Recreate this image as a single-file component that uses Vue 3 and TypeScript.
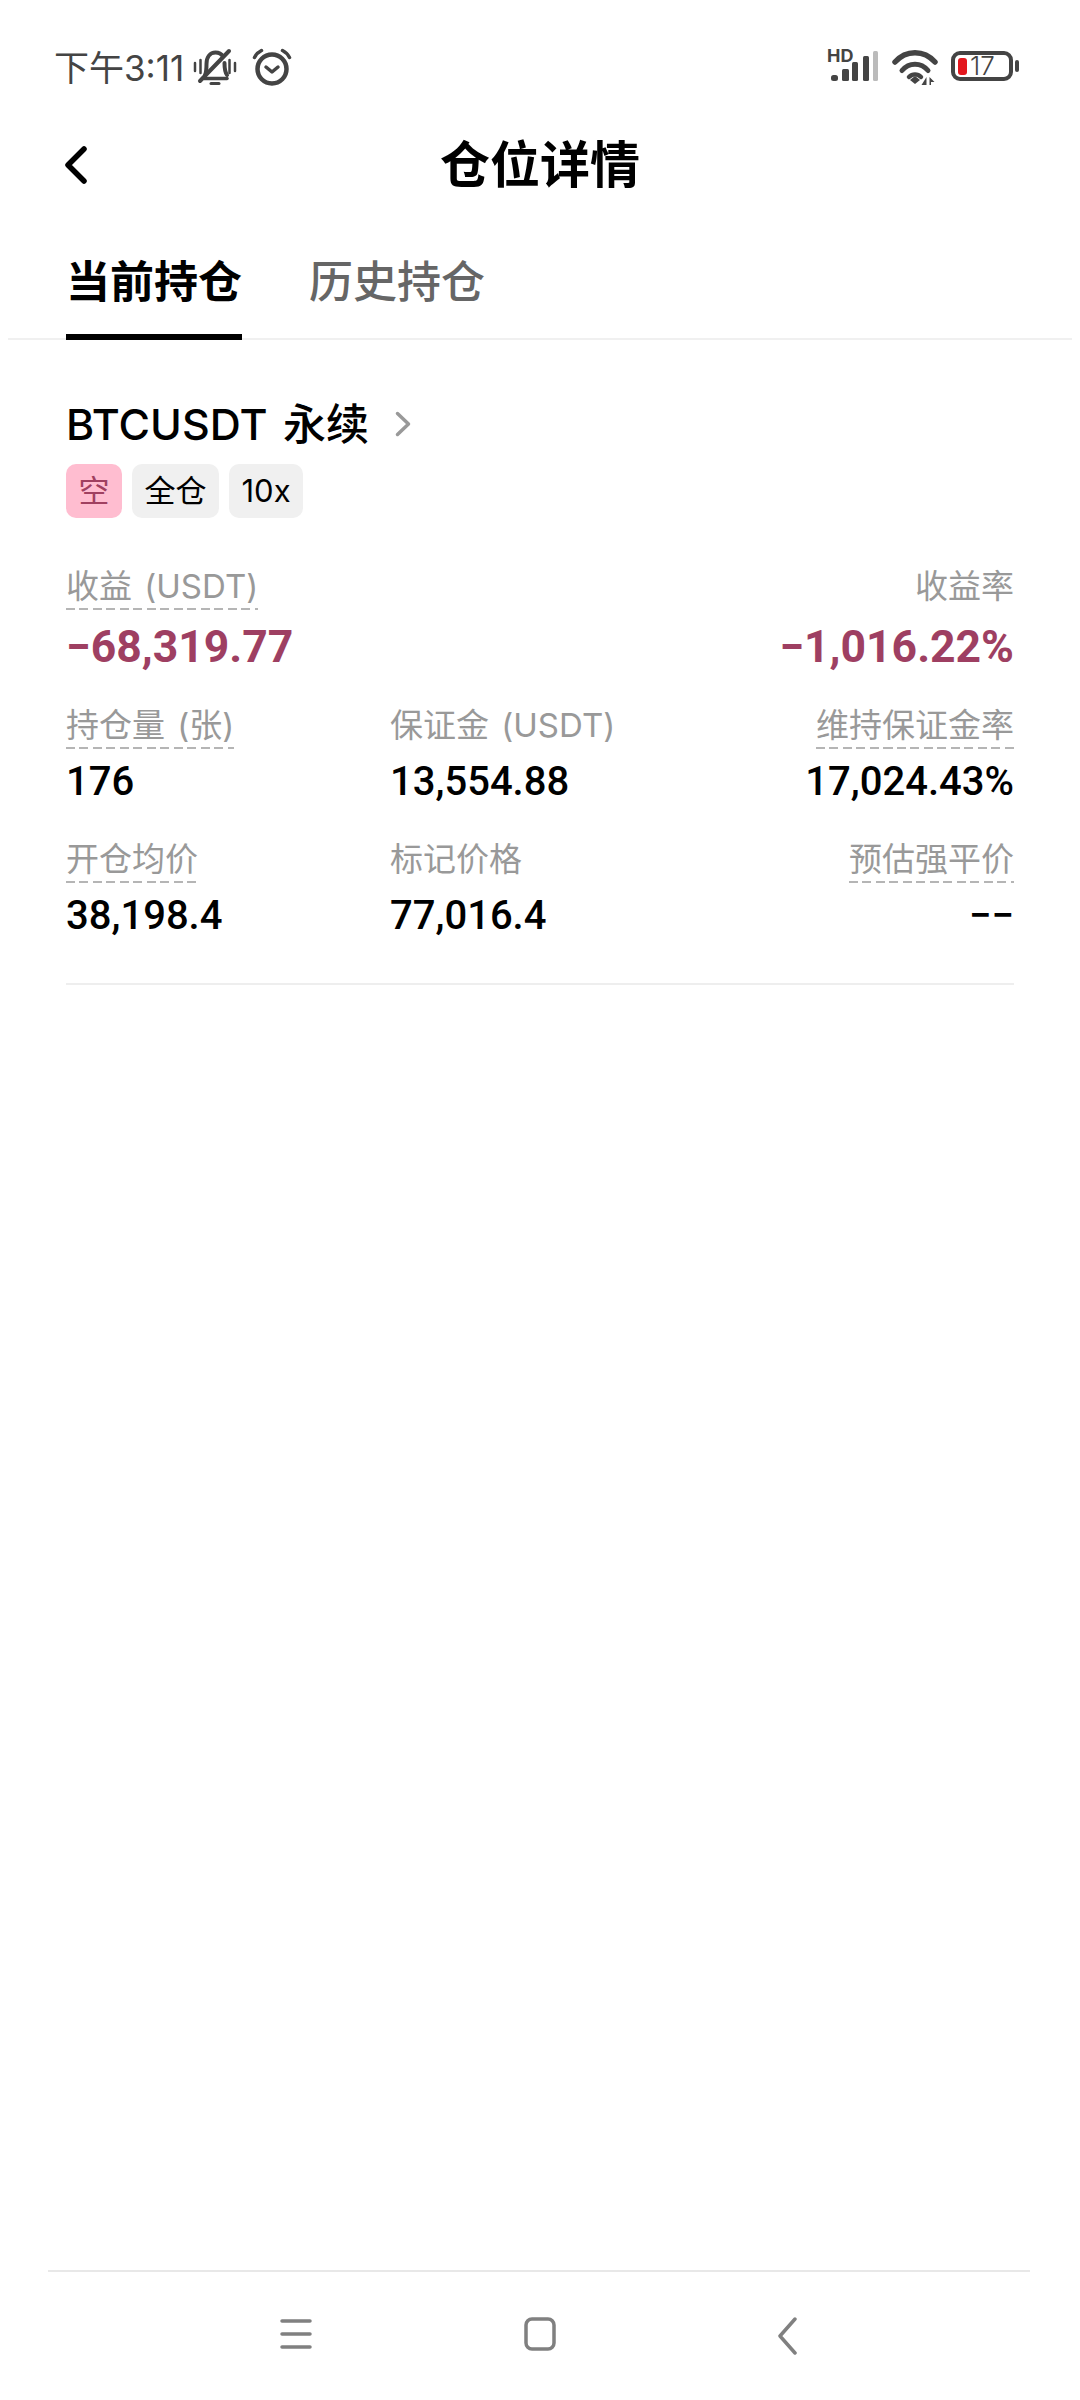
<template>
  <div class="page">
    <div class="status-bar">
      <div class="status-left">
        <span class="time">下午3:11</span>
        <svg class="bell" width="44" height="38" viewBox="0 0 44 38" fill="none" stroke="#444" stroke-linecap="round">
          <path d="M12 27c1.500-3 1.500-7 1.500-11C13.500 9 17 4.500 22.500 4.500c3.500 0 6 1.500 7.500 4M31.500 15c0 5 .5 9 2.500 12" stroke-width="4" />
          <path d="M11 30.500h23" stroke-width="3.500" />
          <path d="M7 33 36 3" stroke-width="4" />
          <path d="M2 15v8M7.500 12v13M36.500 12v13M42 15v8" stroke-width="2.500" />
          <path d="M18 35.500h8" stroke-width="3" />
        </svg>
        <svg class="alarm" width="40" height="38" viewBox="0 0 40 38" fill="none" stroke="#444" stroke-linecap="round" stroke-linejoin="round">
          <circle cx="20" cy="21" r="14.500" stroke-width="4.500" />
          <path d="M14 19l6 5 6-5" stroke-width="3.500" />
          <path d="M2.500 9.500C4 6.500 6.500 4 9.500 2.500M37.500 9.500C36 6.500 33.500 4 30.500 2.500" stroke-width="3.500" />
        </svg>
      </div>
      <div class="status-right">
        <svg width="52" height="34" viewBox="0 0 52 34">
          <text x="0" y="13" class="hd">HD</text>
          <rect x="4" y="26" width="7" height="6" rx="2.500" fill="#444" />
          <rect x="15" y="20" width="7" height="12" rx="1.500" fill="#444" />
          <rect x="25" y="13" width="6" height="19" rx="1.500" fill="#444" />
          <rect x="36" y="7" width="6" height="25" rx="1.500" fill="#444" />
          <rect x="46" y="2" width="5" height="30" rx="1.500" fill="#bbb" />
        </svg>
        <svg width="46" height="37" viewBox="0 0 46 37" fill="none" stroke="#444" stroke-linecap="round">
          <path d="M3 14C14 1.500 32 1.500 43 14" stroke-width="5.500" />
          <path d="M10 22.500C17 14 29 14 36 22.500" stroke-width="5" />
          <path d="M17 29c3.500-3.500 8.500-3.500 12 0" stroke-width="4.500" />
          <path d="M23 28l5 4-5 4-5-4z" fill="#444" stroke="none" />
          <path d="M34.500 29v8h-5zM37.500 37v-8l5 5h-3.500v3z" fill="#444" stroke="none" />
        </svg>
        <div class="battery">
          <div class="battery-body">
            <span class="battery-fill"></span>
            <span class="battery-num">17</span>
          </div>
          <span class="battery-nub"></span>
        </div>
      </div>
    </div>

    <header class="nav">
      <svg class="back" width="24" height="38" viewBox="0 0 24 38" fill="none" stroke="#000" stroke-width="5.500" stroke-linecap="round" stroke-linejoin="round">
        <path d="M20 3 4 19l16 16" />
      </svg>
      <h1 class="title">仓位详情</h1>
    </header>

    <div class="tabs">
      <div class="tab active">当前持仓</div>
      <div class="tab">历史持仓</div>
    </div>

    <section class="position">
      <div class="symbol-row">
        <span class="symbol">BTCUSDT 永续</span>
        <svg width="16" height="26" viewBox="0 0 16 26" fill="none" stroke="#999" stroke-width="3.500" stroke-linecap="round" stroke-linejoin="round">
          <path d="M2.500 2.500 13.500 13 2.500 23.500" />
        </svg>
      </div>
      <div class="tags">
        <span class="tag short">空</span>
        <span class="tag">全仓</span>
        <span class="tag">10x</span>
      </div>

      <div class="pnl-row">
        <div class="cell">
          <span class="label dashed">收益 (USDT)</span>
          <span class="pnl">−68,319.77</span>
        </div>
        <div class="cell right">
          <span class="label">收益率</span>
          <span class="pnl">−1,016.22%</span>
        </div>
      </div>

      <div class="grid">
        <div v-for="m in metrics" :key="m.label" class="cell" :class="{ right: m.right }">
          <span class="label" :class="{ dashed: m.dashed }">{{ m.label }}</span>
          <span class="value">{{ m.value }}</span>
        </div>
      </div>
    </section>

    <footer class="sys-nav">
      <svg width="32" height="34" viewBox="0 0 32 34" stroke="#808080" stroke-width="3.500" stroke-linecap="round">
        <path d="M2 4h28M2 17h28M2 30h28" />
      </svg>
      <svg width="32" height="34" viewBox="0 0 32 34" fill="none" stroke="#808080" stroke-width="3.500">
        <rect x="2" y="2" width="28" height="30" rx="6" />
      </svg>
      <svg width="32" height="38" viewBox="0 0 32 38" fill="none" stroke="#808080" stroke-width="3.500" stroke-linecap="round" stroke-linejoin="round">
        <path d="M27 2 12 19l15 17" />
      </svg>
    </footer>
  </div>
</template>

<script setup lang="ts">
interface Metric {
  label: string
  value: string
  dashed: boolean
  right?: boolean
}

const metrics: Metric[] = [
  { label: '持仓量 (张)', value: '176', dashed: true },
  { label: '保证金 (USDT)', value: '13,554.88', dashed: false },
  { label: '维持保证金率', value: '17,024.43%', dashed: true, right: true },
  { label: '开仓均价', value: '38,198.4', dashed: true },
  { label: '标记价格', value: '77,016.4', dashed: false },
  { label: '预估强平价', value: '−−', dashed: true, right: true },
]
</script>

<style scoped>
.page {
  width: 1080px;
  height: 2400px;
  display: flex;
  flex-direction: column;
  background: #fff;
  color: #000;
  font-family: Inter, "Noto Sans CJK SC", sans-serif;
  overflow: hidden;
}

.status-bar {
  height: 100px;
  padding: 48px 61px 0 54px;
  box-sizing: border-box;
  display: flex;
  justify-content: space-between;
  align-items: flex-start;
  flex-shrink: 0;
}

.status-left {
  display: flex;
  align-items: center;
  height: 38px;
}

.time {
  font-size: 35px;
  line-height: 38px;
  color: #444;
  margin-top: 2px;
}

.bell {
  margin-left: 9px;
}

.alarm {
  margin-left: 15px;
}

.status-right {
  display: flex;
  align-items: center;
  gap: 13px;
  height: 36px;
}

.hd {
  font-size: 18px;
  font-weight: 700;
  fill: #444;
}

.battery {
  display: flex;
  align-items: center;
  gap: 2px;
}

.battery-body {
  width: 62px;
  height: 30px;
  box-sizing: border-box;
  border: 4px solid #444;
  border-radius: 9px;
  display: flex;
  align-items: center;
  padding-left: 3px;
  gap: 3px;
}

.battery-fill {
  width: 9px;
  height: 17px;
  border-radius: 3px;
  background: #e3171e;
}

.battery-num {
  font-size: 26px;
  line-height: 22px;
  color: #444;
  font-weight: 300;
}

.battery-nub {
  width: 4px;
  height: 12px;
  border-radius: 2px;
  background: #444;
}

.nav {
  height: 68px;
  margin-top: 31px;
  padding-left: 64px;
  display: flex;
  align-items: center;
  position: relative;
  flex-shrink: 0;
}

.title {
  position: absolute;
  left: 0;
  right: 0;
  margin: 0;
  text-align: center;
  font-size: 50px;
  line-height: 68px;
  font-weight: 700;
}

.tabs {
  margin: 16px 8px 0;
  padding-left: 58px;
  display: flex;
  gap: 67px;
  border-bottom: 2px solid #f0f0f0;
  box-sizing: border-box;
  height: 125px;
  flex-shrink: 0;
}

.tab {
  font-size: 44px;
  line-height: 60px;
  padding-top: 37px;
  font-weight: 500;
  color: #666;
  box-sizing: border-box;
  height: 125px;
}

.tab.active {
  font-weight: 700;
  color: #000;
  border-bottom: 6px solid #000;
}

.position {
  margin: 0 66px;
  padding: 59px 0 44px;
  border-bottom: 2px solid #eee;
}

.symbol-row {
  display: flex;
  align-items: center;
  gap: 26px;
  height: 50px;
}

.symbol {
  font-size: 43px;
  line-height: 50px;
  font-weight: 500;
  word-spacing: 4px;
}

.tags {
  display: flex;
  gap: 10px;
  margin-top: 15px;
}

.tag {
  height: 54px;
  padding: 0 12.500px;
  border-radius: 10px;
  background: #f0f0f0;
  font-size: 31px;
  line-height: 54px;
}

.tag.short {
  background: #ffbdd0;
  color: #a04060;
}

.pnl-row {
  display: flex;
  justify-content: space-between;
  margin-top: 48px;
}

.cell {
  display: flex;
  flex-direction: column;
  align-items: flex-start;
}

.cell.right {
  align-items: flex-end;
}

.label {
  font-size: 33px;
  line-height: 40px;
  padding-bottom: 4px;
  color: #999;
  word-spacing: 3px;
}

.dashed {
  background: repeating-linear-gradient(to right, #b5b5b5 0 9px, transparent 9px 13.500px) left bottom / 100% 2px no-repeat;
}

.pnl {
  font-family: Roboto, "Noto Sans CJK SC", sans-serif;
  font-size: 44.500px;
  line-height: 52px;
  margin-top: 11px;
  font-weight: 700;
  color: #9e3f62;
}

.grid {
  display: grid;
  grid-template-columns: 324px 1fr 1fr;
  row-gap: 34px;
  margin-top: 32px;
}

.value {
  font-family: Roboto, "Noto Sans CJK SC", sans-serif;
  font-size: 40px;
  line-height: 46px;
  margin-top: 10px;
  font-weight: 500;
}

.sys-nav {
  margin: auto 50px 0 48px;
  height: 130px;
  box-sizing: border-box;
  border-top: 2px solid #e8e8e8;
  padding: 45px 230px 0 232px;
  display: flex;
  align-items: flex-start;
  justify-content: space-between;
  flex-shrink: 0;
}
</style>

<style>
html,
body {
  margin: 0;
  background: #fff;
}
</style>
